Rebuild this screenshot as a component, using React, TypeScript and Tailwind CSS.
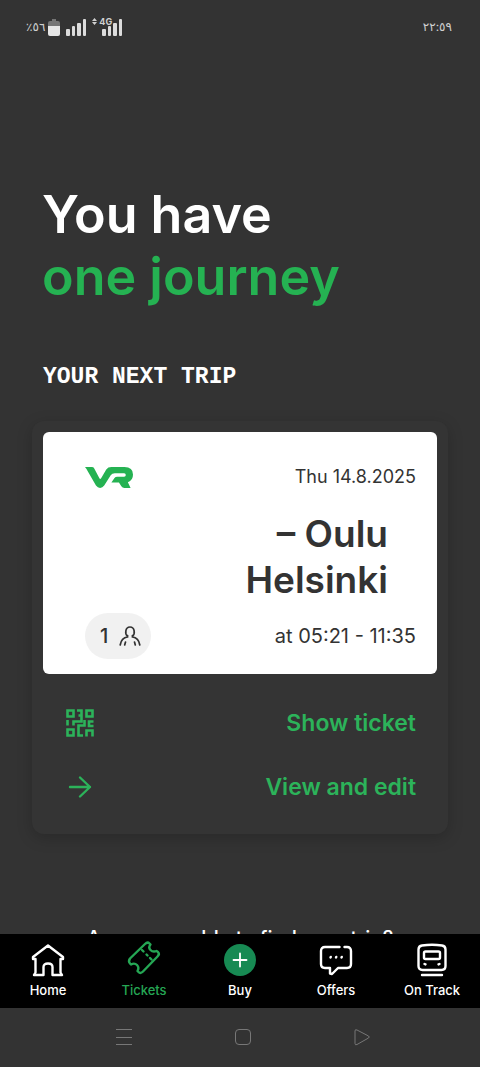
import type { ReactNode } from 'react';

function SignalBars() {
  return (
    <svg viewBox="0 0 21 17" className="h-[17px] w-[21px]" fill="#dcdcdc" aria-hidden="true">
      <rect x="0" y="10" width="4" height="7" rx="1" />
      <rect x="6" y="7" width="3" height="10" rx="1" />
      <rect x="11" y="4" width="4" height="13" rx="1" />
      <rect x="17" y="0" width="3" height="17" rx="1" />
    </svg>
  );
}

function StatusBar() {
  return (
    <header className="flex h-14 shrink-0 items-center justify-between pr-7 pb-0.5 pl-[26px] text-xs text-[#d0d0d0]">
      <div className="flex items-center">
        <span>٪٥٦</span>
        <svg viewBox="0 0 12 17" className="ml-[3px] h-[17px] w-3" aria-hidden="true">
          <path d="M4 0h4v2h2q2 0 2 2v3H0V4q0-2 2-2h2z" fill="#757575" />
          <path d="M0 7h12v8q0 2-2 2H2q-2 0-2-2z" fill="#e6e6e6" />
        </svg>
        <span className="ml-1.5 flex">
          <SignalBars />
        </span>
        <span className="relative ml-[15px] flex">
          <SignalBars />
          <span className="absolute -top-0.5 -left-2.5 flex items-center gap-0.5 text-[9px] leading-[10px] font-bold">
            <svg viewBox="0 0 5 7" className="h-[7px] w-[5px]" fill="currentColor" aria-hidden="true">
              <path d="M2.5 0 5 3H0zM2.5 7 0 4h5z" />
            </svg>
            4G
          </span>
        </span>
      </div>
      <time dateTime="22:59">٢٢:٥٩</time>
    </header>
  );
}

function VrLogo() {
  return (
    <svg viewBox="0 0 140 61" className="h-[21px] w-12" role="img" aria-label="VR">
      <path
        d="M0 0h20q5 0 7 4l15 29q2 4 5 0L62 7q5-7 15-7h38q25 0 25 22 0 18-15 22l8 17h-18q-6 0-9-5l-7-11H77l9-13q3-4 8-4h20q5 0 5-5t-5-5H87q-8 0-12 6L56 54q-5 7-12 7t-12-7L8 12Q5 6 0 0z"
        fill="#25b252"
      />
    </svg>
  );
}

function PassengerIcon() {
  return (
    <svg viewBox="0 0 22 20" className="h-5 w-[22px]" fill="none" stroke="currentColor" strokeWidth="1.7" strokeLinecap="round" aria-hidden="true">
      <path d="M8.5 9.8C5.8 8.2 6 1 11 1s5.2 7.2 2.5 8.8" />
      <path d="M8.5 9.8v1.2C4 11.5 2 14 1.2 19M13.5 9.8v1.2c4.5.5 6.5 3 7.3 8M6.5 16l-.8 3M15.5 16l.8 3" />
    </svg>
  );
}

function QrIcon() {
  return (
    <svg viewBox="0 0 28 28" className="h-7 w-7" fill="none" stroke="currentColor" strokeWidth="2.6" aria-hidden="true">
      <path d="M1.5 1.5h6v6h-6zM20.5 1.5h6v6h-6zM1.5 20.5h6v6h-6z" />
      <path d="M11 1.5h4.5v5h-3M15.5 5.5v7H7.5v4M1.5 11v5.5M18.5 11v5.5h-6v10H17M27.5 12.5H23V17h4.5M20.5 27.5v-6h6v6" />
    </svg>
  );
}

function ArrowIcon() {
  return (
    <svg viewBox="0 0 28 28" className="h-7 w-7" fill="none" stroke="currentColor" strokeWidth="2.4" strokeLinecap="round" strokeLinejoin="round" aria-hidden="true">
      <path d="M4 14h20M14 4.5 24 14l-10 9.5" />
    </svg>
  );
}

function NavIcon({ children }: { children: ReactNode }) {
  return (
    <svg viewBox="0 0 32 32" className="h-8 w-8 overflow-visible" fill="none" stroke="currentColor" strokeWidth="2.4" strokeLinecap="round" strokeLinejoin="round" aria-hidden="true">
      {children}
    </svg>
  );
}

const tabs = [
  {
    label: 'Home',
    icon: (
      <NavIcon>
        <path d="M1 13 16 1.500 31 13v2h-2.500v13.500l1.500 2.500h-9.500v-8q0-3.500-4.500-3.500t-4.500 3.500v8H2l1.500-2.500V15H1z" />
      </NavIcon>
    ),
  },
  {
    label: 'Tickets',
    active: true,
    icon: (
      <NavIcon>
        <g transform="translate(0 -2.5)">
          <path d="M2 17 17 2.500q2.500-2.500 4.500-.5l1 1q-2.500 3 0 5.500t6 1l1.500 1q2 2-.5 4.500L15 30q-2.500 2.500-4.500.5l-1-1q2-3.500-.5-6t-6-.5l-1-1q-2-2 0-5z" />
          <path d="M14 8.500l1.500 1.500M18.500 13l1 1M22 16.500l1.500 1.500" />
        </g>
      </NavIcon>
    ),
  },
  {
    label: 'Buy',
    icon: (
      <NavIcon>
        <circle cx="16" cy="16" r="16" fill="#178a53" stroke="none" />
        <path d="M16 9.500v13M9.500 16h13" strokeWidth="1.8" />
      </NavIcon>
    ),
  },
  {
    label: 'Offers',
    icon: (
      <NavIcon>
        <path d="M19.500 3H5Q1 3 1 7v13q0 4 4 4h5v5.500l2 .5 6-6h9q4 0 4-4V7q0-4-4-4h-2.500" />
        <path d="M10.500 13.500l.3-.6M16 13.500l.3-.6M21.500 13.500l.3-.6" />
      </NavIcon>
    ),
  },
  {
    label: 'On Track',
    icon: (
      <NavIcon>
        <path d="M6 1.500q10-1.500 20 0 3.500.5 3.500 4V22q0 4-4 4h-19q-4 0-4-4V5.500Q2.500 2 6 1.500z" />
        <rect x="8" y="7.500" width="16" height="7.500" rx="1.500" />
        <path d="M8.500 20l1 .4M23.500 20l-1 .4M6 31h20" />
      </NavIcon>
    ),
  },
];

function TabBar() {
  return (
    <nav className="grid h-[74px] shrink-0 grid-cols-5 bg-black pt-2.5">
      {tabs.map((tab) => (
        <a
          key={tab.label}
          href="#"
          aria-current={tab.active ? 'page' : undefined}
          className={`flex flex-col items-center gap-1 text-[13px] leading-5 font-medium ${tab.active ? 'text-[#25a654]' : 'text-white'}`}
        >
          {tab.icon}
          {tab.label}
        </a>
      ))}
    </nav>
  );
}

function SystemBar() {
  return (
    <footer className="flex h-[59px] shrink-0 items-center justify-center gap-[101px] pb-0.5 pl-1.5 text-[#777777]">
      <button type="button" aria-label="Recent apps">
        <svg viewBox="0 0 18 18" className="size-[18px]" fill="none" stroke="currentColor" aria-hidden="true">
          <path d="M1 1.500h16M1 9.500h16M1 16.500h16" />
        </svg>
      </button>
      <button type="button" aria-label="Home screen">
        <svg viewBox="0 0 18 18" className="size-[18px]" fill="none" stroke="currentColor" aria-hidden="true">
          <rect x="1.500" y="1.500" width="15" height="15" rx="3.500" />
        </svg>
      </button>
      <button type="button" aria-label="Back">
        <svg viewBox="0 0 18 18" className="size-[18px]" fill="none" stroke="currentColor" strokeLinejoin="round" aria-hidden="true">
          <path d="M2 3q0-2 2-1l11.500 6q1.500 1 0 2L4 16.500q-2 1-2-1z" />
        </svg>
      </button>
    </footer>
  );
}

function JourneyCard() {
  return (
    <article className="mx-8 mt-[29px] rounded-xl bg-[#343434] p-[11px] shadow-[0_4px_16px_rgba(0,0,0,0.2)]">
      <div className="rounded-md bg-white pt-[30px] pr-[21px] pb-[15px] pl-[42px] text-[#333333]">
        <div className="flex items-center justify-between">
          <VrLogo />
          <span className="text-lg leading-[30px]">Thu 14.8.2025</span>
        </div>
        <h3 className="mt-[19px] pr-7 text-right text-[37px] leading-[46px] font-semibold">
          – Oulu
          <br />
          Helsinki
        </h3>
        <div className="mt-2.5 flex items-center justify-between">
          <span className="flex h-[46px] items-center gap-[11px] rounded-full bg-[#f1f1f1] pr-2.5 pl-[15px] text-xl font-medium">
            1
            <PassengerIcon />
          </span>
          <span className="text-xl leading-[30px]">at 05:21 - 11:35</span>
        </div>
      </div>
      <div className="flex flex-col pt-[17px] pr-[21px] pb-1 pl-[23px] text-[23px] font-semibold text-[#2cb35a]">
        <button type="button" className="flex h-16 items-center justify-between">
          <QrIcon />
          Show ticket
        </button>
        <button type="button" className="flex h-16 items-center justify-between">
          <ArrowIcon />
          View and edit
        </button>
      </div>
    </article>
  );
}

export default function App() {
  return (
    <div className="flex h-dvh flex-col bg-[#333333] font-['Inter','Noto_Sans','DejaVu_Sans',sans-serif] text-white">
      <StatusBar />
      <main className="min-h-0 flex-1 overflow-y-auto [scrollbar-width:none]">
        <h1 className="px-[42px] pt-32 text-[52px] leading-[62px] font-semibold">
          You have
          <br />
          <span className="text-[#25b252]">one journey</span>
        </h1>
        <h2 className="mt-[54px] px-[43px] font-['Liberation_Mono',monospace] text-[23px] leading-[30px] font-bold">
          YOUR NEXT TRIP
        </h2>
        <JourneyCard />
        <p className="mt-[89px] px-8 pb-10 text-center text-xl leading-[30px] font-medium">
          Are you unable to find your trip?
        </p>
      </main>
      <TabBar />
      <SystemBar />
    </div>
  );
}
